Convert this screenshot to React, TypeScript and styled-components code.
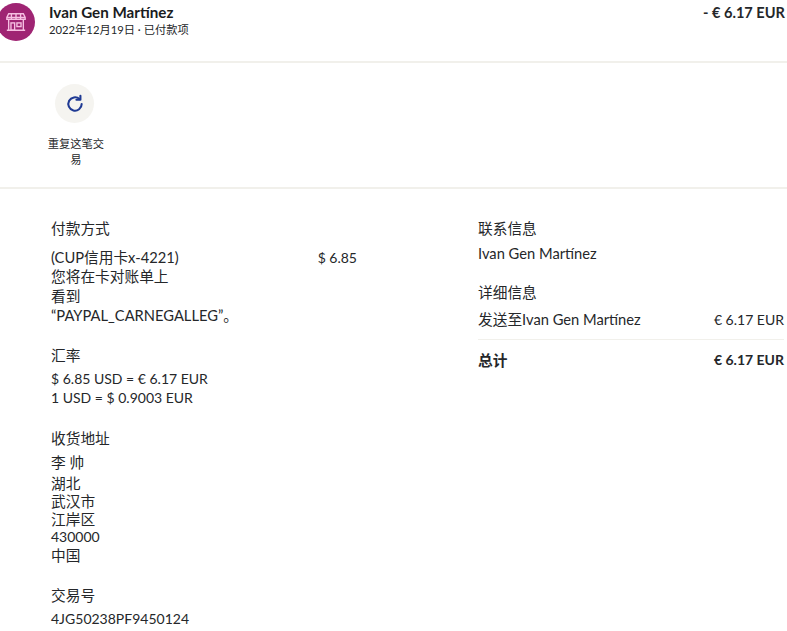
import React from "react";
import styled, { createGlobalStyle } from "styled-components";

const Global = createGlobalStyle`
  html, body { margin: 0; padding: 0; background: #fff; overflow: hidden; }
  body { font-family: Lato, "Noto Sans CJK SC", sans-serif; color: #25272a; font-size: 14.7px; }
`;
const Page = styled.div`width: 787px; height: 631px; overflow: hidden;`;
const Header = styled.header`
  display: flex; justify-content: space-between; height: 61px; border-bottom: 2px solid #f1f0eb; padding-right: 2px;
`;
const Who = styled.div`display: flex; gap: 14px; padding-top: 3px;`;
const Avatar = styled.div`
  width: 38px; height: 38px; margin-left: -3px; border-radius: 50%; background: #9f2473; display: flex; align-items: center; justify-content: center;
`;
const Name = styled.div`font-size: 15.2px; font-weight: 700; line-height: 18px; color: #1a1c1e;`;
const Sub = styled.div`font-size: 11.25px; line-height: 16px; margin-top: 1px;`;
const Amount = styled.div`font-size: 14.6px; font-weight: 700; padding-top: 4px; line-height: 18px;`;
const Actions = styled.div`box-sizing: border-box; height: 126px; border-bottom: 2px solid #f1f0eb; padding: 21px 0 0 47px;`;
const Action = styled.div`width: 58px; display: flex; flex-direction: column; align-items: center;`;
const Round = styled.div`width: 39px; height: 39px; margin-right: 3px; border-radius: 50%; background: #f5f4f0; display: flex; align-items: center; justify-content: center;`;
const ActionLabel = styled.div`font-size: 11.25px; line-height: 16px; text-align: center; margin-top: 13px;`;
const Body = styled.div`display: grid; grid-template-columns: 306px 1fr; padding: 29px 3px 0 51px; column-gap: 121px;`;
const Col = styled.div`display: flex; flex-direction: column;`;
const Section = styled.section<{ $after?: number }>`margin-bottom: ${(p) => p.$after ?? 20}px;`;
const Title = styled.div<{ $gap?: number }>`line-height: 20px; margin-bottom: ${(p) => p.$gap ?? 4}px;`;
const Line = styled.div`line-height: 19.5px;`;
const Figure = styled.div`font-size: 14px; line-height: 19.5px;`;
const AddressName = styled.div`line-height: 20px; margin-bottom: 2px;`;
const AddressLine = styled.div`line-height: 18px;`;
const AddressFigure = styled(AddressLine)`font-size: 14px;`;
const Row = styled.div`display: flex; justify-content: space-between; align-items: flex-start;`;
const PayRow = styled(Row)`padding-top: 4.5px;`;
const Method = styled.div`width: 210px; line-height: 19.6px;`;
const Divider = styled.div`border-top: 1px solid #f1f0eb; margin: 10px 0 9.5px;`;
const Bold = styled.div`font-weight: 700; line-height: 20px;`;
const BoldFigure = styled(Bold)`font-size: 14px;`;

export default function App() {
  return (
    <Page>
      <Global />
      <Header>
        <Who>
          <Avatar>
            <svg width="22" height="22" viewBox="0 0 24 24" fill="none" stroke="#f6bfe2" strokeWidth="1.5">
              <path d="M4 3h16l2 4v2H2V7zM2 7h20M7 3v6M12 3v6M17 3v6" />
              <path d="M4 9v12M20 9v12M2 21h20" />
              <rect x="6.5" y="13" width="4" height="8" />
              <rect x="13" y="13" width="4.5" height="4" />
            </svg>
          </Avatar>
          <div>
            <Name>Ivan Gen Martínez</Name>
            <Sub>2022年12月19日 · 已付款项</Sub>
          </div>
        </Who>
        <Amount>- € 6.17 EUR</Amount>
      </Header>
      <Actions>
        <Action>
          <Round>
            <svg width="20" height="20" viewBox="0 0 24 24" fill="none" stroke="#1f3a93" strokeWidth="2.5" strokeLinecap="round" strokeLinejoin="round">
              <path d="M20 12a8 8 0 1 1-2.6-5.9" />
              <path d="M18.5 2v4.8h-4.8" />
            </svg>
          </Round>
          <ActionLabel>重复这笔交易</ActionLabel>
        </Action>
      </Actions>
      <Body>
        <Col>
          <Section $after={19}>
            <Title $gap={5}>付款方式</Title>
            <PayRow>
              <Method>(CUP信用卡x-4221)<br />您将在卡对账单上<br />看到<br />“PAYPAL_CARNEGALLEG”。</Method>
              <Figure>$ 6.85</Figure>
            </PayRow>
          </Section>
          <Section>
            <Title>汇率</Title>
            <Figure>$ 6.85 USD = € 6.17 EUR</Figure>
            <Figure>1 USD = $ 0.9003 EUR</Figure>
          </Section>
          <Section $after={21}>
            <Title>收货地址</Title>
            <AddressName>李 帅</AddressName>
            <AddressLine>湖北</AddressLine>
            <AddressLine>武汉市</AddressLine>
            <AddressLine>江岸区</AddressLine>
            <AddressFigure>430000</AddressFigure>
            <AddressLine>中国</AddressLine>
          </Section>
          <Section>
            <Title>交易号</Title>
            <Figure>4JG50238PF9450124</Figure>
          </Section>
        </Col>
        <Col>
          <Section $after={18}>
            <Title $gap={6}>联系信息</Title>
            <Line>Ivan Gen Martínez</Line>
          </Section>
          <div>
            <Title $gap={8}>详细信息</Title>
            <Row>
              <Line>发送至Ivan Gen Martínez</Line>
              <Figure>€ 6.17 EUR</Figure>
            </Row>
            <Divider />
            <Row>
              <Bold>总计</Bold>
              <BoldFigure>€ 6.17 EUR</BoldFigure>
            </Row>
          </div>
        </Col>
      </Body>
    </Page>
  );
}
